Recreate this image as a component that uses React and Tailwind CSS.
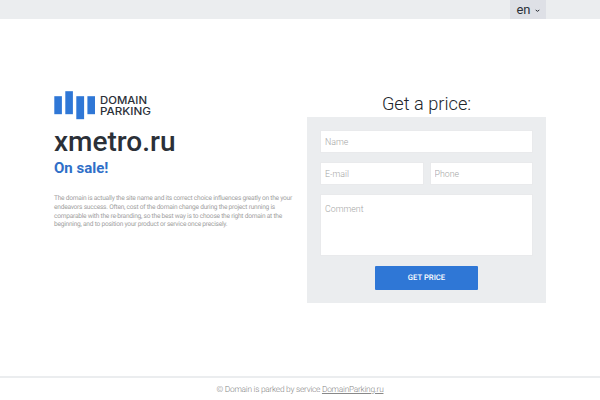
import React from 'react';

const Logo = () => (
  <svg width="98" height="29" viewBox="0 0 98 29" className="block">
    <g fill="#2f77d6">
      <rect x="0.3" y="5.2" width="7.6" height="18" />
      <rect x="11.3" y="0.2" width="7.6" height="23" />
      <rect x="22.3" y="5.2" width="7.8" height="23" />
      <rect x="33.4" y="5.2" width="7.6" height="18" />
    </g>
    <g fill="#2b3038" fontFamily="Inter, sans-serif" fontSize="10" fontWeight="500">
      <text x="46" y="12.9" textLength="47" lengthAdjust="spacingAndGlyphs">DOMAIN</text>
      <text x="46" y="23.7" textLength="51" lengthAdjust="spacingAndGlyphs">PARKING</text>
    </g>
  </svg>
);

const TopBar = () => (
  <header className="flex h-[18.5px] justify-end bg-[#ebedef] pr-[54px]">
    <button className="flex h-full w-9 items-center justify-center gap-1 bg-[#dee0e6] text-[13px] leading-none text-[#2b3038]">
      <span>en</span>
      <svg width="5" height="4" viewBox="0 0 5 4" fill="none" stroke="#2b3038" className="mt-[3px]">
        <path d="M0.7 1 L2.5 2.3 L4.3 1" />
      </svg>
    </button>
  </header>
);

const fieldStyle =
  'block w-full min-w-0 rounded-none border border-[#e9eaec] bg-white px-1 text-[8.8px] font-light text-[#555] placeholder:text-[#a5a5a5] outline-none';

const PriceForm = () => (
  <section className="w-[239px]">
    <h2 className="h-[26px] text-center text-[18.2px] leading-[26px] font-light text-[#22262b]">Get a price:</h2>
    <form className="flex h-[186px] flex-col bg-[#ebedef] px-[13px] pt-[13px]">
      <input className={`${fieldStyle} h-[23px]`} placeholder="Name" />
      <div className="mt-[9px] flex gap-[6px]">
        <input className={`${fieldStyle} h-[23px]`} placeholder="E-mail" />
        <input className={`${fieldStyle} h-[23px]`} placeholder="Phone" />
      </div>
      <textarea className={`${fieldStyle} mt-[9px] h-[62px] resize-none pt-2`} placeholder="Comment" />
      <button
        type="button"
        className="mx-auto mt-[10px] h-6 w-[103px] rounded-[1px] bg-[#2f77d6] text-[7.7px] font-medium text-white [text-rendering:geometricPrecision]"
      >
        GET PRICE
      </button>
    </form>
  </section>
);

export default function App() {
  return (
    <div className="flex h-[400px] w-[600px] flex-col overflow-hidden bg-white font-['Roboto',sans-serif]">
      <TopBar />
      <main className="flex flex-1 justify-between px-[54px] pt-[72.5px]">
        <section className="w-[245px]">
          <Logo />
          <h1 className="mt-[5px] text-[28px] leading-[34px] font-medium text-[#2b3038]">xmetro.ru</h1>
          <p className="text-[15px] leading-[18px] font-bold text-[#2f6fc8]">On sale!</p>
          <p className="mt-[17px] text-[6.6px] leading-[8.75px] tracking-[-0.24px] whitespace-nowrap text-[#a0a0a0] [text-rendering:geometricPrecision]">
            The domain is actually the site name and its correct choice influences greatly on the your
            <br />
            endeavors success. Often, cost of the domain change during the project running is
            <br />
            comparable with the re-branding, so the best way is to choose the right domain at the
            <br />
            beginning, and to position your product or service once precisely.
          </p>
        </section>
        <PriceForm />
      </main>
      <footer className="h-6 border-t-2 border-[#ebedef] pt-[6px] text-center text-[8.4px] leading-[12px] font-light tracking-[-0.26px] text-[#888] [text-rendering:geometricPrecision]">
        © Domain is parked by service{' '}
        <a href="#" className="underline">DomainParking.ru</a>
      </footer>
    </div>
  );
}
